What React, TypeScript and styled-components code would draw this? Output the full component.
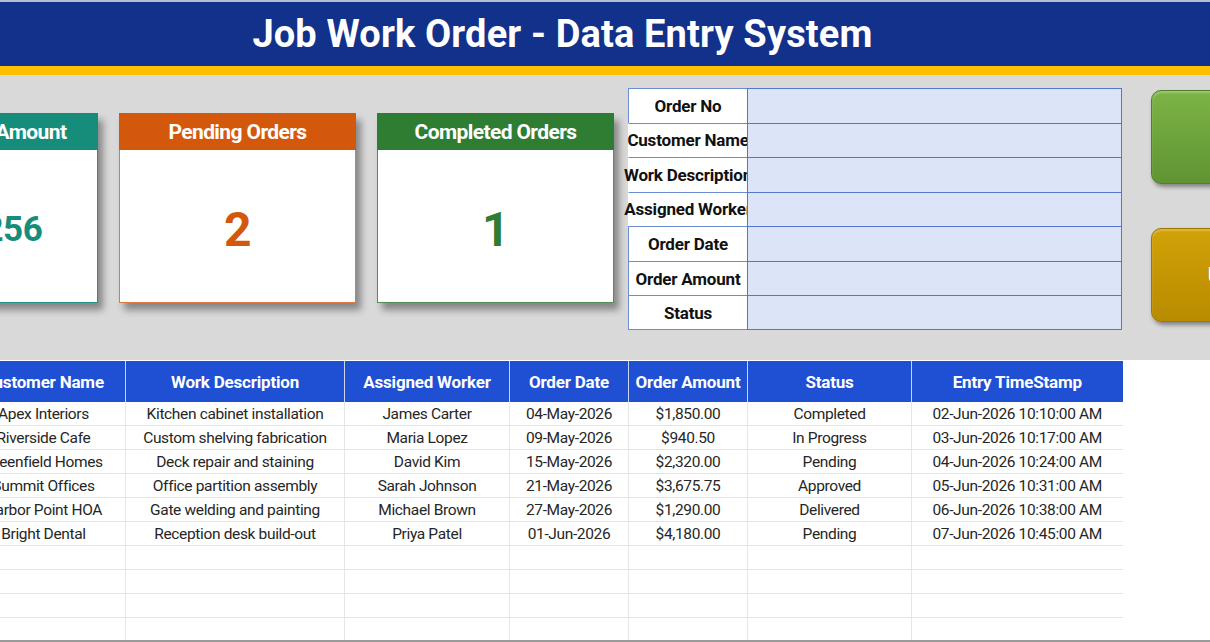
import styled, { createGlobalStyle } from 'styled-components';

const FONT = `Roboto, "Liberation Sans", Arial, sans-serif`;

const GlobalStyle = createGlobalStyle`
  html, body {
    margin: 0;
    padding: 0;
    background: #fff;
  }
  body {
    font-family: ${FONT};
    color: #1a1a1a;
  }
`;

const Page = styled.div`
  width: 1210px;
  height: 642px;
  overflow: hidden;
  box-sizing: border-box;
  border-top: 2px solid #b3bdd4;
  border-bottom: 2px solid #9a9a9a;
  background: #fff;
`;

const TitleBar = styled.div`
  height: 64px;
  background: #12318a;
  display: flex;
  align-items: center;
  justify-content: center;
  padding-right: 85px;
`;

const Title = styled.h1`
  margin: 0;
  color: #fff;
  font-size: 38px;
  font-weight: 700;
  letter-spacing: 0.15px;
`;

const Stripe = styled.div`
  height: 9px;
  background: #ffc000;
`;

const Panel = styled.div`
  height: 285px;
  background: #d9d9d9;
  display: flex;
  align-items: flex-start;
`;

const CardRow = styled.div`
  display: flex;
  gap: 21px;
  margin: 38px 0 0 -139px;
`;

const Card = styled.div<{ $color: string; $edge: string }>`
  width: 237px;
  height: 190px;
  display: flex;
  flex-direction: column;
  background: #fff;
  box-shadow: 5px 7px 7px rgba(0, 0, 0, 0.38);

  & > header {
    height: 37px;
    background: ${(p) => p.$color};
    color: #fff;
    font-size: 21px;
    font-weight: 700;
    letter-spacing: -0.6px;
    display: flex;
    align-items: center;
    justify-content: center;
    white-space: nowrap;
  }

  & > div {
    flex: 1;
    border: 1px solid ${(p) => p.$edge};
    border-top: none;
    display: flex;
    align-items: center;
    justify-content: center;
    padding-top: 6px;
    color: ${(p) => p.$color};
    font-weight: 700;
  }
`;

const CardValue = styled.span<{ $size: number }>`
  font-size: ${(p) => p.$size}px;
  letter-spacing: -0.5px;
`;

const FormGrid = styled.div`
  margin: 13px 0 0 14px;
  width: 494px;
  height: 242px;
  display: grid;
  grid-template-columns: 119px 375px;
  grid-template-rows: repeat(7, 1fr);
`;

const Label = styled.div<{ $spill?: boolean }>`
  background: #fff;
  border-top: 1px solid #6d8dd2;
  border-left: 1px solid ${(p) => (p.$spill ? '#fff' : '#6d8dd2')};
  display: flex;
  align-items: center;
  justify-content: center;
  white-space: nowrap;
  font-size: 17px;
  font-weight: 700;
  letter-spacing: -0.2px;
  color: #111;

  &:nth-last-child(2) {
    border-bottom: 1px solid #6d8dd2;
  }
`;

const Field = styled.div`
  position: relative;
  background: #dce5f8;
  border-top: 1px solid #5478c8;
  border-left: 1px solid #5478c8;
  border-right: 1px solid #5478c8;

  &:last-child {
    border-bottom: 1px solid #5478c8;
  }
`;

const ButtonStack = styled.div`
  margin: 15px 0 0 29px;
  display: flex;
  flex-direction: column;
  gap: 44px;
`;

const ActionButton = styled.button<{ $from: string; $to: string; $edge: string }>`
  width: 184px;
  height: 94px;
  border: 1px solid ${(p) => p.$edge};
  border-radius: 10px;
  background: linear-gradient(180deg, ${(p) => p.$from} 0%, ${(p) => p.$to} 100%);
  box-shadow: 2px 3px 4px rgba(0, 0, 0, 0.4), inset 0 2px 2px rgba(255, 255, 255, 0.25);
  color: #fff;
  font-family: ${FONT};
  font-size: 22px;
  font-weight: 700;
  padding: 0;
  flex-shrink: 0;
`;

const Table = styled.table`
  margin: 1px 0 0 -39px;
  border-collapse: collapse;
  table-layout: fixed;
  width: 1161px;

  th {
    height: 41px;
    padding: 0;
    background: #1f4fd3;
    color: #fff;
    font-size: 17px;
    font-weight: 700;
    letter-spacing: -0.2px;
    border-left: 1px solid #c9d5f3;
    white-space: nowrap;
  }

  th:first-child {
    border-left: none;
  }

  td {
    height: 23px;
    padding: 0;
    text-align: center;
    font-size: 15.5px;
    letter-spacing: -0.35px;
    color: #262626;
    border-bottom: 1px solid #e3e3e3;
    border-left: 1px solid #e6e6e6;
    white-space: nowrap;
  }
`;

const cards = [
  { title: 'Total Order Amount', value: '$14,256', size: 35, color: '#168d7b', edge: '#1f9482' },
  { title: 'Pending Orders', value: '2', size: 48, color: '#d4580c', edge: '#e07a3c' },
  { title: 'Completed Orders', value: '1', size: 48, color: '#2e7d32', edge: '#4e9152' },
];

const fields = [
  { label: 'Order No' },
  { label: 'Customer Name', spill: true },
  { label: 'Work Description', spill: true },
  { label: 'Assigned Worker', spill: true },
  { label: 'Order Date' },
  { label: 'Order Amount' },
  { label: 'Status' },
];

const columns = [
  { name: 'Customer Name', width: 164 },
  { name: 'Work Description', width: 219 },
  { name: 'Assigned Worker', width: 165 },
  { name: 'Order Date', width: 119 },
  { name: 'Order Amount', width: 119 },
  { name: 'Status', width: 164 },
  { name: 'Entry TimeStamp', width: 211 },
];

const rows = [
  ['Apex Interiors', 'Kitchen cabinet installation', 'James Carter', '04-May-2026', '$1,850.00', 'Completed', '02-Jun-2026 10:10:00 AM'],
  ['Riverside Cafe', 'Custom shelving fabrication', 'Maria Lopez', '09-May-2026', '$940.50', 'In Progress', '03-Jun-2026 10:17:00 AM'],
  ['Greenfield Homes', 'Deck repair and staining', 'David Kim', '15-May-2026', '$2,320.00', 'Pending', '04-Jun-2026 10:24:00 AM'],
  ['Summit Offices', 'Office partition assembly', 'Sarah Johnson', '21-May-2026', '$3,675.75', 'Approved', '05-Jun-2026 10:31:00 AM'],
  ['Harbor Point HOA', 'Gate welding and painting', 'Michael Brown', '27-May-2026', '$1,290.00', 'Delivered', '06-Jun-2026 10:38:00 AM'],
  ['Bright Dental', 'Reception desk build-out', 'Priya Patel', '01-Jun-2026', '$4,180.00', 'Pending', '07-Jun-2026 10:45:00 AM'],
];

const emptyRows = 4;

export default function App(): JSX.Element {
  return (
    <>
      <GlobalStyle />
      <Page>
        <TitleBar>
          <Title>Job Work Order - Data Entry System</Title>
        </TitleBar>
        <Stripe />
        <Panel>
          <CardRow>
            {cards.map((c) => (
              <Card key={c.title} $color={c.color} $edge={c.edge}>
                <header>{c.title}</header>
                <div>
                  <CardValue $size={c.size}>{c.value}</CardValue>
                </div>
              </Card>
            ))}
          </CardRow>
          <FormGrid>
            {fields.map((f) => [
              <Label key={f.label} $spill={f.spill}>
                {f.label}
              </Label>,
              <Field key={f.label + '-field'} />,
            ])}
          </FormGrid>
          <ButtonStack>
            <ActionButton $from="#7db446" $to="#5f9432" $edge="#4f7f27">
              Save
            </ActionButton>
            <ActionButton $from="#d2a208" $to="#b88b00" $edge="#9c7700">
              Update
            </ActionButton>
          </ButtonStack>
        </Panel>
        <Table>
          <colgroup>
            {columns.map((c) => (
              <col key={c.name} style={{ width: c.width }} />
            ))}
          </colgroup>
          <thead>
            <tr>
              {columns.map((c) => (
                <th key={c.name}>{c.name}</th>
              ))}
            </tr>
          </thead>
          <tbody>
            {rows.map((r) => (
              <tr key={r[0]}>
                {r.map((cell, i) => (
                  <td key={i}>{cell}</td>
                ))}
              </tr>
            ))}
            {Array.from({ length: emptyRows }).map((_, i) => (
              <tr key={'empty-' + i}>
                {columns.map((c) => (
                  <td key={c.name} />
                ))}
              </tr>
            ))}
          </tbody>
        </Table>
      </Page>
    </>
  );
}
